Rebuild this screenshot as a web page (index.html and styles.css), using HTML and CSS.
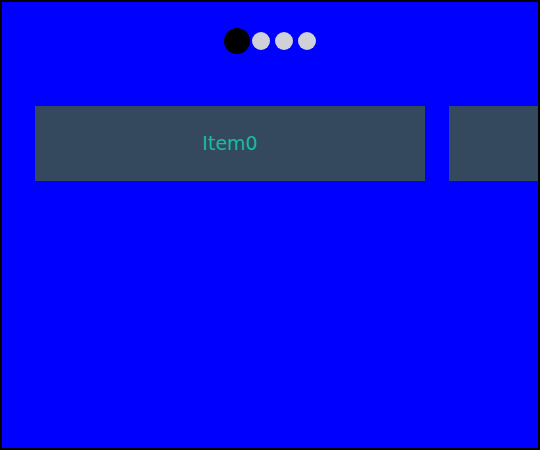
FILE: index.html
```html
<!DOCTYPE html>
<html>
<head>
<meta charset="utf-8">
<link rel="stylesheet" href="styles.css">
</head>
<body>
<div class="frame">
  <div class="dots">
    <span class="dot active"></span>
    <span class="dot"></span>
    <span class="dot"></span>
    <span class="dot"></span>
  </div>
  <div class="track">
    <div class="card"><span class="label">Item0</span></div>
    <div class="card"></div>
  </div>
</div>
</body>
</html>
```
FILE: styles.css
```css
html, body {
  margin: 0;
  padding: 0;
}
body {
  width: 540px;
  height: 450px;
  overflow: hidden;
}
.frame {
  box-sizing: border-box;
  width: 540px;
  height: 450px;
  border: 2px solid #000;
  background: #0000ff;
  overflow: hidden;
  padding-top: 25px;
}
.dots {
  display: flex;
  justify-content: center;
  align-items: center;
  height: 28px;
  gap: 5px;
}
.dot {
  width: 18px;
  height: 18px;
  border-radius: 50%;
  background: #d0d0d9;
  flex: none;
}
.dot.active {
  width: 26px;
  height: 26px;
  background: #000;
  margin-right: -3px;
}
.track {
  display: flex;
  gap: 24px;
  margin-top: 51px;
  padding-left: 33px;
}
.card {
  flex: none;
  box-sizing: border-box;
  width: 390px;
  height: 75px;
  padding-bottom: 2px;
  background: #34495e;
  color: #1abc9c;
  font-family: "DejaVu Sans", sans-serif;
  font-size: 19px;
  display: flex;
  align-items: center;
  justify-content: center;
}
```
